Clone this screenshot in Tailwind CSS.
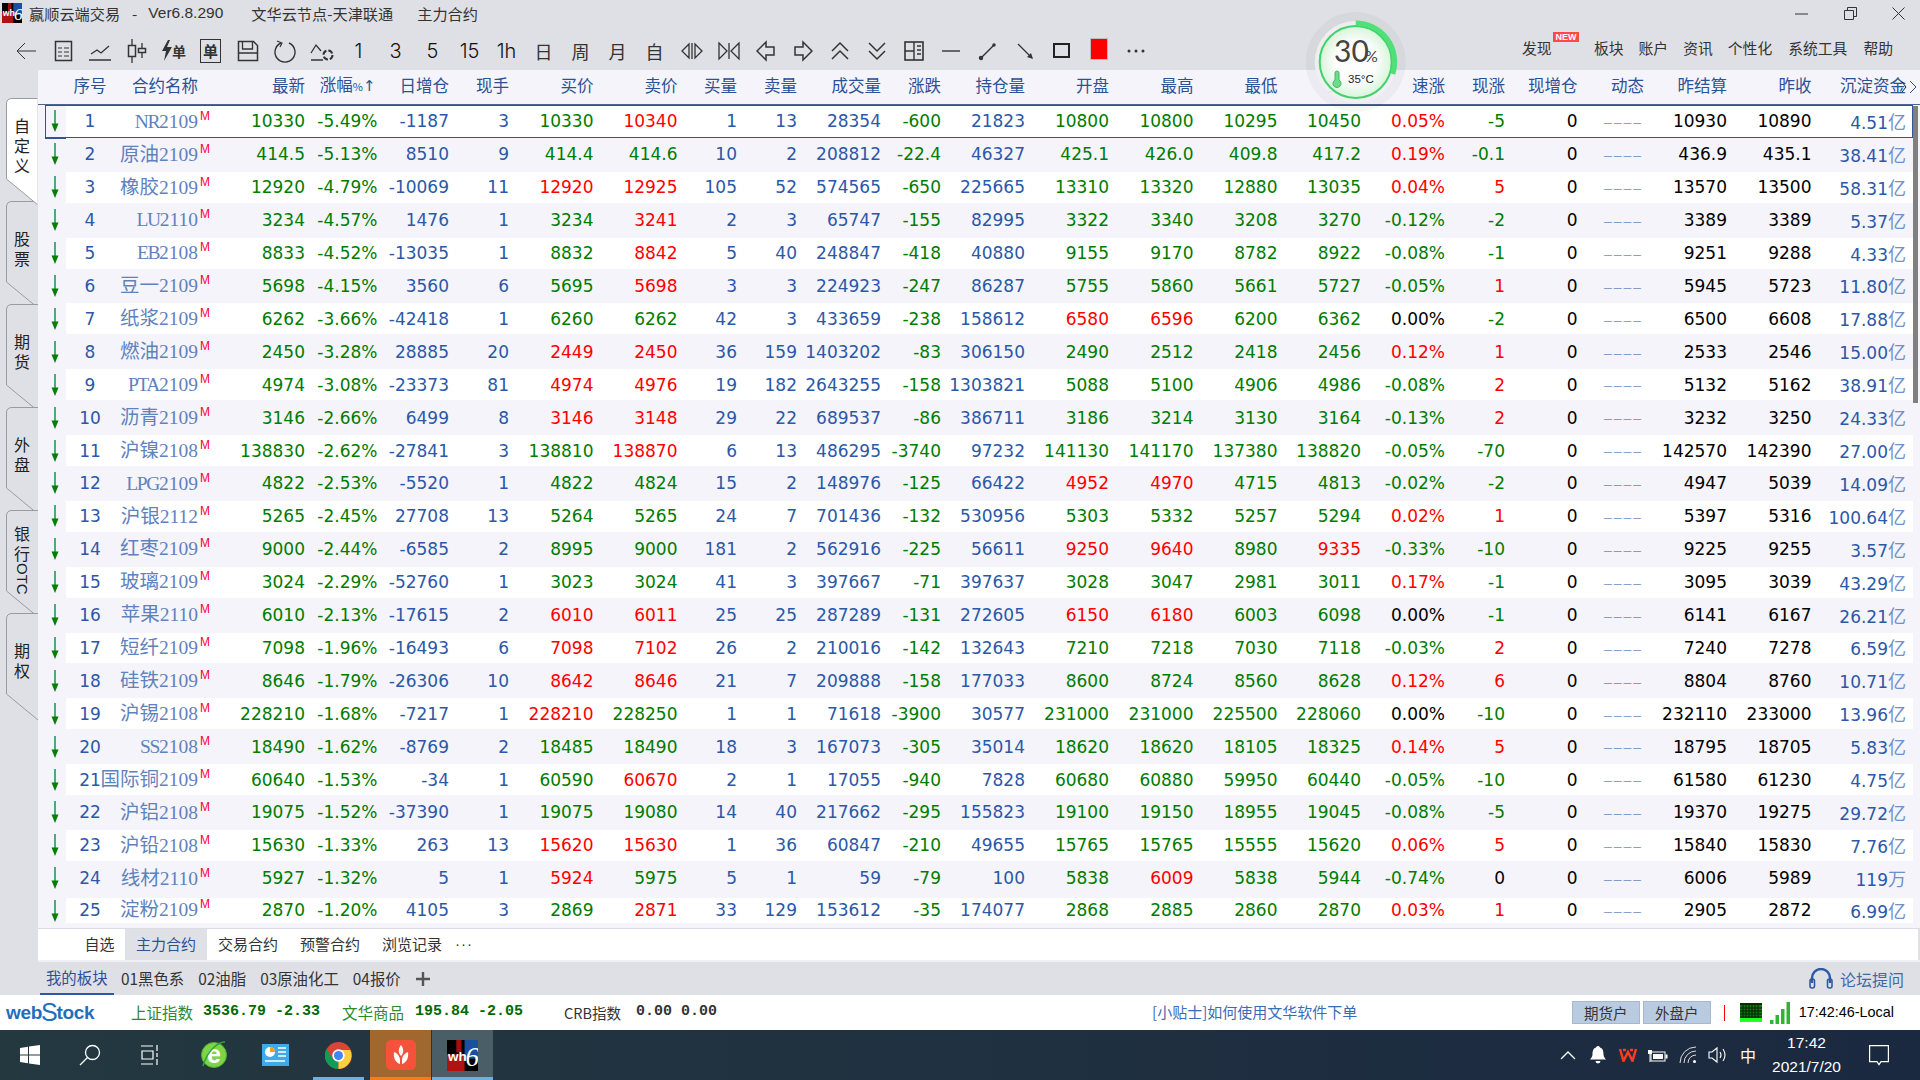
<!DOCTYPE html>
<html lang="zh">
<head>
  <meta charset="UTF-8" />
  <title>赢顺云端交易</title>
  <script src="https://cdn.jsdelivr.net/npm/@tailwindcss/browser@4"></script>
</head>
<body class="m-0 bg-[#dfe0e5] font-['Noto_Sans_CJK_SC',sans-serif] text-[#333]">

<svg class="hidden">
  <symbol id="wh6" viewBox="0 0 30 30">
    <rect width="30" height="30" fill="#000"/>
    <rect y="14" width="17" height="16" fill="#b01212"/>
    <rect x="9" y="0" width="5" height="12" fill="#a01010"/>
    <rect x="17" width="13" height="18" fill="#1c4fa0"/>
    <text x="1" y="20" font-family="Liberation Sans" font-weight="700" font-size="13" fill="#fff">wh</text>
    <text x="18" y="25" font-family="Liberation Serif" font-style="italic" font-size="26" fill="#fff">6</text>
  </symbol>
</svg>

<div class="relative w-[1920px] h-[1080px] overflow-hidden flex flex-col">

  <!-- title bar -->
  <div class="h-[26px] mb-[2px] flex items-center text-[15.2px] whitespace-nowrap">
    <svg class="ml-[2px] w-[20px] h-[20px]"><use href="#wh6"/></svg>
    <span class="ml-[7px] w-[89px]">赢顺云端交易</span>
    <span class="ml-[14px]">-</span>
    <span class="ml-[11px] font-['Liberation_Sans'] text-[15.5px]">Ver6.8.290</span>
    <span class="ml-[28px]">文华云节点-天津联通</span>
    <span class="ml-[24px]">主力合约</span>
    <div class="ml-auto flex items-center text-[#333]">
      <svg class="w-[13px] h-[13px]" viewBox="0 0 13 13"><path d="M0 7h13" stroke="currentColor"/></svg>
      <svg class="ml-[36px] w-[13px] h-[13px]" viewBox="0 0 13 13" fill="none" stroke="currentColor"><path d="M.5 3.5h9v9h-9zM3.5 3V.5h9v9h-3"/></svg>
      <svg class="ml-[35px] mr-[15px] w-[13px] h-[13px]" viewBox="0 0 13 13" stroke="currentColor"><path d="M.5.5l12 12M12.5.5l-12 12"/></svg>
    </div>
  </div>

  <!-- toolbar -->
  <div class="h-[42px] flex items-center whitespace-nowrap">
    <div id="tools" class="ml-[7px] mt-[3px] flex items-center text-[#333] h-[30px]">
      <div class="w-[37px] flex justify-center"><svg width="22" height="22" fill="none" stroke="currentColor" viewBox="0 0 22 22"><path d="M21 11H2M10 3l-8 8 8 8"/></svg></div>
      <div class="w-[37px] flex justify-center"><svg width="22" height="24" fill="none" stroke="currentColor" viewBox="0 0 22 24"><rect x="3.5" y="2.5" width="16" height="19" stroke-width="1.5"/><path d="M6 9h4M12 9h5M6 13h4M12 13h5M6 17h4M12 17h5"/></svg></div>
      <div class="w-[37px] flex justify-center"><svg width="24" height="22" fill="none" stroke="currentColor" viewBox="0 0 24 22"><path d="M3 14l6-4 4 3 8-7M1 20h22" stroke-width="1.3"/></svg></div>
      <div class="w-[37px] flex justify-center"><svg width="24" height="26" fill="none" stroke="currentColor" viewBox="0 0 24 26"><path d="M7 1v24M17 5v15" stroke-width="1.3"/><rect x="3.5" y="7.5" width="7" height="11" fill="#dfe0e5" stroke-width="1.5"/><rect x="13.5" y="10.5" width="7" height="4" fill="#dfe0e5" stroke-width="1.5"/></svg></div>
      <div class="w-[37px] flex justify-center items-center"><svg width="12" height="24" viewBox="0 0 12 24"><path d="M7 1L1 12h4l-2 10 8-14H6l3-7z" fill="#333"/></svg><span class="text-[14px] leading-none -ml-[1px] font-bold">单</span></div>
      <div class="w-[37px] flex justify-center"><div class="w-[21px] h-[24px] border-[1.5px] border-[#333] flex items-center justify-center text-[15px] leading-none font-bold">单</div></div>
      <div class="w-[37px] flex justify-center"><svg width="24" height="24" fill="none" stroke="currentColor" viewBox="0 0 24 24"><path d="M2.5 2.5h15l4 4v15h-19z" stroke-width="1.5"/><path d="M6.5 3v7h10V3M2.5 14h19" stroke-width="1.3"/></svg></div>
      <div class="w-[37px] flex justify-center"><svg width="24" height="24" fill="none" stroke="currentColor" viewBox="0 0 24 24"><path d="M8 4a10 10 0 1 0 8 0" stroke-width="1.4"/><path d="M4 2l5 2-2 4" stroke-width="1.2"/></svg></div>
      <div class="w-[37px] flex justify-center"><svg width="24" height="22" fill="none" stroke="currentColor" viewBox="0 0 24 22"><path d="M1 13l5-8 5 6M1 20h12" stroke-width="1.3"/><circle cx="18" cy="15" r="4.5" stroke-width="2" stroke-dasharray="5 2"/></svg></div>
      <div class="w-[37px] text-center text-[20px] text-[#111] font-['Inter'] font-light leading-none">1</div>
      <div class="w-[37px] text-center text-[20px] text-[#111] font-['Inter'] font-light leading-none">3</div>
      <div class="w-[37px] text-center text-[20px] text-[#111] font-['Inter'] font-light leading-none">5</div>
      <div class="w-[37px] text-center text-[20px] text-[#111] font-['Inter'] font-light leading-none">15</div>
      <div class="w-[37px] text-center text-[20px] text-[#111] font-['Inter'] font-light leading-none">1h</div>
      <div class="w-[37px] text-center text-[18px] leading-none">日</div>
      <div class="w-[37px] text-center text-[18px] leading-none">周</div>
      <div class="w-[37px] text-center text-[18px] leading-none">月</div>
      <div class="w-[37px] text-center text-[18px] leading-none">自</div>
      <div class="w-[37px] flex justify-center"><svg width="22" height="20" fill="none" stroke="currentColor" stroke-width="1.3" viewBox="0 0 22 20"><path d="M8 3L1 10l7 7zM14 3l7 7-7 7zM11 2v16"/></svg></div>
      <div class="w-[37px] flex justify-center"><svg width="22" height="20" fill="none" stroke="currentColor" stroke-width="1.3" viewBox="0 0 22 20"><path d="M1 2l8 8-8 8zM21 2l-8 8 8 8zM11 2v16"/></svg></div>
      <div class="w-[37px] flex justify-center"><svg width="20" height="22" fill="none" stroke="currentColor" stroke-width="1.5" viewBox="0 0 20 22"><path d="M10 2L1 11l9 9v-5h8V7h-8z"/></svg></div>
      <div class="w-[37px] flex justify-center"><svg width="20" height="22" fill="none" stroke="currentColor" stroke-width="1.5" viewBox="0 0 20 22"><path d="M10 2l9 9-9 9v-5H2V7h8z"/></svg></div>
      <div class="w-[37px] flex justify-center"><svg width="20" height="20" fill="none" stroke="currentColor" stroke-width="1.5" viewBox="0 0 20 20"><path d="M2 10l8-8 8 8M2 18l8-8 8 8"/></svg></div>
      <div class="w-[37px] flex justify-center"><svg width="20" height="20" fill="none" stroke="currentColor" stroke-width="1.5" viewBox="0 0 20 20"><path d="M2 2l8 8 8-8M2 10l8 8 8-8"/></svg></div>
      <div class="w-[37px] flex justify-center"><svg width="20" height="20" fill="none" stroke="currentColor" viewBox="0 0 20 20"><rect x="1" y="1" width="18" height="18" stroke-width="1.6"/><path d="M1 10h9M10 1v18M13 5h4M13 9h4M13 13h4" stroke-width="1.4"/></svg></div>
      <div class="w-[37px] flex justify-center"><svg width="20" height="20" stroke="currentColor" stroke-width="1.4" viewBox="0 0 20 20"><path d="M1 10h18"/></svg></div>
      <div class="w-[37px] flex justify-center"><svg width="20" height="20" fill="currentColor" stroke="currentColor" stroke-width="1.4" viewBox="0 0 20 20"><path d="M3 17L16 4"/><circle cx="3" cy="17" r="1.5"/><circle cx="16" cy="4" r="1"/></svg></div>
      <div class="w-[37px] flex justify-center"><svg width="20" height="20" fill="currentColor" stroke="currentColor" stroke-width="1.2" viewBox="0 0 20 20"><path d="M3 3l13 13"/><path d="M18 18l-6-2 4-4z" stroke="none"/></svg></div>
      <div class="w-[37px] flex justify-center"><div class="w-[17px] h-[15px] border-2 border-[#222]"></div></div>
      <div class="w-[37px] flex justify-center"><div class="w-[18px] h-[22px] bg-[#ff0000] border border-[#bbb] -mt-[4px]"></div></div>
      <div class="w-[37px] flex justify-center"><svg width="20" height="6" fill="currentColor" viewBox="0 0 20 6"><circle cx="3" cy="3" r="1.5"/><circle cx="10" cy="3" r="1.5"/><circle cx="17" cy="3" r="1.5"/></svg></div>
    </div>
    <div class="ml-auto pr-[27px] flex items-center text-[14.8px] -mt-[1px]">
      <div class="relative w-[30px]">发现<span class="absolute left-[31px] -top-[5px] w-[26px] h-[10px] bg-[#ff4848] text-white text-[9px] leading-[10px] font-bold text-center font-['Liberation_Sans']">NEW</span></div>
      <span class="ml-[42px]">板块</span>
      <span class="ml-[15px]">账户</span>
      <span class="ml-[15px]">资讯</span>
      <span class="ml-[15px]">个性化</span>
      <span class="ml-[16px]">系统工具</span>
      <span class="ml-[16px]">帮助</span>
    </div>
  </div>

  <!-- main -->
  <div class="h-[892px] flex">
    <div class="w-[38px] shrink-0 pt-[28px]" id="sidetabs">
      <div class="relative z-10 ml-[6px] w-[32px] h-[107px] -mb-[4px]">
        <svg class="absolute inset-0" width="32" height="107" viewBox="0 0 32 107"><path d="M32 .5H6Q.5 .5 .5 6V81L32 107Z" fill="#fff" stroke="#9a9aa2"/><path d="M32 0V107" stroke="#fff"/></svg>
        <div class="absolute inset-0 pt-[17px] flex flex-col items-center text-[16px] leading-[20px] text-[#222]"><span>自</span><span>定</span><span>义</span></div>
      </div>
      <div class="relative ml-[6px] w-[32px] h-[107px] -mb-[4px]">
        <svg class="absolute inset-0" width="32" height="107" viewBox="0 0 32 107"><path d="M32 .5H6Q.5 .5 .5 6V81L32 107" fill="#dfe0e5" stroke="#9a9aa2"/></svg>
        <div class="absolute inset-0 pt-[27px] flex flex-col items-center text-[16px] leading-[20px] text-[#222]"><span>股</span><span>票</span></div>
      </div>
      <div class="relative ml-[6px] w-[32px] h-[107px] -mb-[4px]">
        <svg class="absolute inset-0" width="32" height="107" viewBox="0 0 32 107"><path d="M32 .5H6Q.5 .5 .5 6V81L32 107" fill="#dfe0e5" stroke="#9a9aa2"/></svg>
        <div class="absolute inset-0 pt-[27px] flex flex-col items-center text-[16px] leading-[20px] text-[#222]"><span>期</span><span>货</span></div>
      </div>
      <div class="relative ml-[6px] w-[32px] h-[107px] -mb-[4px]">
        <svg class="absolute inset-0" width="32" height="107" viewBox="0 0 32 107"><path d="M32 .5H6Q.5 .5 .5 6V81L32 107" fill="#dfe0e5" stroke="#9a9aa2"/></svg>
        <div class="absolute inset-0 pt-[27px] flex flex-col items-center text-[16px] leading-[20px] text-[#222]"><span>外</span><span>盘</span></div>
      </div>
      <div class="relative ml-[6px] w-[32px] h-[107px] -mb-[4px]">
        <svg class="absolute inset-0" width="32" height="107" viewBox="0 0 32 107"><path d="M32 .5H6Q.5 .5 .5 6V81L32 107" fill="#dfe0e5" stroke="#9a9aa2"/></svg>
        <div class="absolute inset-0 pt-[13px] flex flex-col items-center text-[16px] leading-[20px] text-[#222]"><span>银</span><span>行</span><span class="[writing-mode:vertical-rl] font-['Liberation_Sans'] text-[15px]">OTC</span></div>
      </div>
      <div class="relative ml-[6px] w-[32px] h-[107px]">
        <svg class="absolute inset-0" width="32" height="107" viewBox="0 0 32 107"><path d="M32 .5H6Q.5 .5 .5 6V81L32 107" fill="#dfe0e5" stroke="#9a9aa2"/></svg>
        <div class="absolute inset-0 pt-[27px] flex flex-col items-center text-[16px] leading-[20px] text-[#222]"><span>期</span><span>权</span></div>
      </div>
    </div>

    <div class="relative w-[1882px] flex flex-col">
      <!-- table header -->
      <div class="relative h-[35px] shrink-0 bg-[#f4f4fa] border-b border-[#4a6490] pl-[28px] pb-[4px] grid grid-cols-[48px_96px_95px_72.5px_71.5px_60px_84.5px_84px_59.5px_60px_84px_60px_84px_84px_84.5px_84px_83.5px_84px_60px_72.5px_71.5px_78px_84.5px_94.5px] items-center text-right text-[16.5px] text-[#2c5196] whitespace-nowrap">
        <span class="text-center">序号</span><span class="pr-[12px]">合约名称</span><span>最新</span><span class="pr-[2px]">涨幅<span class="text-[11px]">%</span><span class="font-['DejaVu_Sans'] text-[15px]">↑</span></span><span>日增仓</span><span>现手</span><span>买价</span><span>卖价</span><span>买量</span><span>卖量</span><span>成交量</span><span>涨跌</span><span>持仓量</span><span>开盘</span><span>最高</span><span>最低</span><span>结算</span><span>速涨</span><span>现涨</span><span>现增仓</span><span class="pr-[5px]">动态</span><span>昨结算</span><span>昨收</span><span>沉淀资金</span>
        <svg class="absolute left-[1863px] top-[10px]" width="16" height="14" fill="none" viewBox="0 0 16 14"><path d="M1 2l4 5-4 5" stroke="#222"/><path d="M9 1l6 6-6 6" stroke="#2c5196"/></svg>
      </div>
      <!-- table body -->
      <div class="relative h-[823px] shrink-0 bg-[#f4f4fa]">
        <div id="rows" class="w-[1875px] flex flex-col"></div>
        <div class="absolute left-[1875px] top-[1px] w-[5px] h-[297px] bg-[#808080]"></div>
      </div>
      <div class="h-px shrink-0 bg-[#dcdce4]"></div>
      <!-- sheet tabs -->
      <div class="h-[31px] w-[1880px] shrink-0 bg-white flex items-center text-[15px] whitespace-nowrap">
        <span class="ml-[46.5px]">自选</span>
        <span class="ml-[10.5px] w-[82px] h-full flex items-center justify-center bg-[#dfe1e7] text-[#2c5196]">主力合约</span>
        <span class="ml-[11px]">交易合约</span>
        <span class="ml-[22px]">预警合约</span>
        <span class="ml-[22px]">浏览记录</span>
        <span class="ml-[13px] font-['Liberation_Sans'] tracking-[1px]">···</span>
      </div>
      <div class="h-[2px] shrink-0 bg-[#f0f0f5]"></div>
    </div>
  </div>

  <!-- sector tabs -->
  <div class="h-[33px] shrink-0 flex items-center text-[15.4px] text-[#333] whitespace-nowrap">
    <span class="ml-[40px] w-[73.5px] h-full flex items-center justify-center text-[#2c5196] border-b-2 border-[#2c5aa8]">我的板块</span>
    <span class="ml-[7.5px]">01黑色系</span>
    <span class="ml-[14px]">02油脂</span>
    <span class="ml-[14px]">03原油化工</span>
    <span class="ml-[14px]">04报价</span>
    <svg class="ml-[15px]" width="14" height="14" viewBox="0 0 14 14" stroke="#555" stroke-width="2.4"><path d="M0 7h14M7 0v14"/></svg>
    <div class="ml-auto pr-[16px] flex items-center text-[#3d6aa8]">
      <svg width="24" height="21" fill="none" stroke="#2c5aa8" viewBox="0 0 24 21"><path d="M3 15V10a9 9 0 0 1 18 0v5" stroke-width="2.4"/><rect x="1" y="11" width="4.5" height="9" rx="2" stroke-width="1.6"/><rect x="18.5" y="11" width="4.5" height="9" rx="2" stroke-width="1.6"/></svg>
      <span class="ml-[7px] text-[16px]">论坛提问</span>
    </div>
  </div>

  <!-- status bar -->
  <div class="h-[35px] shrink-0 bg-white flex items-center whitespace-nowrap text-[15.5px]">
    <div class="ml-[6px] w-[83px] font-['Liberation_Sans'] font-bold text-[#1e6fc0] text-[19px] tracking-[-0.3px] flex items-center leading-none">web<span class="text-[25px] font-normal -mx-[1px]">S</span>tock</div>
    <span class="ml-[42px] w-[62px] text-[#2c8a2c]">上证指数</span>
    <span class="ml-[10px] font-['Liberation_Mono'] font-bold text-[15px] text-[#006a00]">3536.79 -2.33</span>
    <span class="ml-[22px] w-[62px] text-[#2c8a2c]">文华商品</span>
    <span class="ml-[11px] font-['Liberation_Mono'] font-bold text-[15px] text-[#006a00]">195.84 -2.05</span>
    <span class="ml-[41px] w-[55px] text-[#333] text-[14.5px]">CRB指数</span>
    <span class="ml-[17px] font-['Liberation_Mono'] font-bold text-[15px] text-[#333]">0.00 0.00</span>
    <span class="ml-[435px] text-[15px] text-[#3a6cb5]">[小贴士]如何使用文华软件下单</span>
    <div class="ml-auto pr-[26px] flex items-center">
      <span class="w-[68px] h-[23px] flex items-center justify-center bg-[#b9cbe0] border border-[#a8b8cc] text-[14.5px] text-[#333]">期货户</span>
      <span class="ml-[3px] w-[68px] h-[23px] flex items-center justify-center bg-[#b9cbe0] border border-[#a8b8cc] text-[14.5px] text-[#333]">外盘户</span>
      <span class="ml-[13px] w-px h-[16px] bg-[#ff0000]"></span>
      <svg class="ml-[15px]" width="22" height="19" viewBox="0 0 22 19"><rect width="22" height="19" fill="#0a2a0a"/><rect y="15" width="22" height="4" fill="#22ff22"/><rect y="2" width="22" height="13" fill="#0c7a0c"/><path d="M3 2v13M6 2v13M9 2v13M12 2v13M15 2v13M18 2v13M0 5h22M0 8h22M0 11h22M0 14h22" stroke="#082008"/></svg>
      <svg class="ml-[8px]" width="20" height="22" viewBox="0 0 20 22" fill="#2fb52f"><rect x="0" y="18" width="3.5" height="4"/><rect x="5.5" y="13" width="3.5" height="9"/><rect x="11" y="7" width="3.5" height="15"/><rect x="16.5" y="0" width="3.5" height="22"/></svg>
      <span class="ml-[9px] font-['Liberation_Sans'] text-[14.4px] text-black">17:42:46-Local</span>
    </div>
  </div>

  <!-- taskbar -->
  <div class="h-[50px] shrink-0 flex bg-linear-to-r from-[#243840] to-[#1b2940] text-white">
    <div class="w-[60px] flex items-center justify-center"><svg width="20" height="20" viewBox="0 0 20 20" fill="#fff"><path d="M0 3l8-1.200V9.500H0zM9 1.600L20 0v9.500H9zM0 10.500h8V18.200L0 17zM9 10.500h11V20L9 18.400z"/></svg></div>
    <div class="w-[60px] flex items-center justify-center"><svg width="22" height="22" viewBox="0 0 22 22" fill="none" stroke="#fff" stroke-width="1.3"><circle cx="13.500" cy="8.500" r="7"/><path d="M8.500 13.500L1 21"/></svg></div>
    <div class="w-[61px] flex items-center justify-center"><svg width="20" height="20" viewBox="0 0 20 20" fill="none" stroke="#fff" stroke-width="1.200"><path d="M0 1h12M0 19h12M1 6h11v8H1zM16 0v6M16 8v4M16 14v6"/></svg></div>
    <div class="ml-[2px] w-[62px] flex items-center justify-center"><svg width="28" height="30" viewBox="0 0 28 30"><circle cx="14" cy="15" r="12.500" fill="#7ed348"/><circle cx="14" cy="15" r="12.500" fill="none" stroke="#4fb02e"/><text x="14" y="23" text-anchor="middle" font-family="Liberation Sans" font-weight="700" font-size="25" fill="#fff">e</text><path d="M25 2C20 2 8 8 3 26" fill="none" stroke="#2ea32e" stroke-width="1.500"/></svg></div>
    <div class="w-[61px] flex items-center justify-center"><svg width="27" height="22" viewBox="0 0 27 22"><rect width="27" height="22" fill="#3fa9ea"/><circle cx="8" cy="8" r="5" fill="#fff"/><path d="M8 8V3a5 5 0 0 1 5 5z" fill="#f39c2a"/><path d="M16 4h8M16 8h8M16 12h8M3 17h20" stroke="#fff" stroke-width="1.500"/></svg></div>
    <div class="ml-[2px] w-[61px] relative flex items-center justify-center"><svg width="27" height="27" viewBox="0 0 48 48"><circle cx="24" cy="24" r="24" fill="#db4437"/><path d="M24 24L3 36A24 24 0 0 0 24 48z" fill="#0f9d58"/><path d="M3 36A24 24 0 0 1 3 12L15 32z" fill="#0f9d58"/><path d="M24 14h21A24 24 0 0 1 24 48z" fill="#ffcd40"/><circle cx="24" cy="24" r="11" fill="#fff"/><circle cx="24" cy="24" r="8" fill="#4285f4"/></svg><span class="absolute left-[5px] bottom-0 w-[51px] h-[3px] bg-[#6ab0e8]"></span></div>
    <div class="ml-px w-[61px] relative flex items-center justify-center bg-[#a0672f]"><svg width="30" height="30" viewBox="0 0 30 30"><rect width="30" height="30" rx="5" fill="#f4523a"/><path d="M15 5c3 4 3 8 0 11-3-3-3-7 0-11zM8 12c3 1 6 4 6 8v4c-4-1-7-6-6-12zM22 12c-3 1-6 4-6 8v4c4-1 7-6 6-12z" fill="#fff"/></svg><span class="absolute left-0 bottom-0 w-full h-[3px] bg-[#ff7a10]"></span></div>
    <div class="ml-px w-[61px] relative flex items-center justify-center bg-[#4a5e68]"><svg class="w-[31px] h-[31px]"><use href="#wh6"/></svg><span class="absolute left-0 bottom-0 w-full h-[3px] bg-[#6ab0e8]"></span></div>

    <div class="ml-auto pr-[12px] flex items-center text-white">
      <div class="w-[30px] flex justify-center"><svg width="16" height="10" viewBox="0 0 16 10" fill="none" stroke="#fff" stroke-width="1.300"><path d="M1 9l7-7 7 7"/></svg></div>
      <div class="w-[30px] flex justify-center"><svg width="18" height="20" viewBox="0 0 18 20" fill="#fff"><path d="M9 1a2 2 0 0 1 2 1.500c3 1 3.500 4 3.500 7 0 2 1 3 2.500 5H1c1.500-2 2.500-3 2.500-5 0-3 .5-6 3.500-7A2 2 0 0 1 9 1zM6.500 16h5a2.500 2.500 0 0 1-5 0z"/></svg></div>
      <div class="w-[30px] flex justify-center"><svg width="18" height="14" viewBox="0 0 18 14" fill="none" stroke="#ff3b1f" stroke-width="2.500"><path d="M1 1l3.500 12L9 4l4.500 9L17 1M4 2h3M11 2h3"/></svg></div>
      <div class="w-[30px] flex justify-center"><svg width="20" height="13" viewBox="0 0 20 13"><path d="M0 1h4v4H0z" fill="#fff"/><path d="M2 5v8" stroke="#fff"/><rect x="3" y="3" width="14" height="9" fill="none" stroke="#fff"/><rect x="5" y="5" width="10" height="5" fill="#fff"/><rect x="17.500" y="5.500" width="2" height="4" fill="#fff"/></svg></div>
      <div class="w-[30px] flex justify-center"><svg width="18" height="18" viewBox="0 0 18 18" fill="none" stroke="#ddd"><path d="M1 17A16 16 0 0 1 17 1M5 17A12 12 0 0 1 17 5M9 17a8 8 0 0 1 8-8"/><circle cx="15.500" cy="15.500" r="1.500" fill="#fff" stroke="none"/></svg></div>
      <div class="w-[30px] flex justify-center"><svg width="20" height="18" viewBox="0 0 20 18" fill="none" stroke="#fff"><path d="M1 6h3l5-4v14l-5-4H1zM12 6q2 3 0 6M15 3q4 6 0 12" stroke-width="1.100"/></svg></div>
      <div class="w-[30px] text-center text-[16px] leading-none">中</div>
      <div class="w-[87px] text-center text-[15.5px] leading-[24px] font-['Liberation_Sans']"><div>17:42</div><div>2021/7/20</div></div>
      <div class="w-[58px] flex justify-center"><svg width="20" height="21" viewBox="0 0 20 21" fill="none" stroke="#fff" stroke-width="1.200"><path d="M.6.600h18.800v16H12l-2 3-2-3H.6z"/></svg></div>
    </div>
  </div>

  <!-- cpu gauge -->
  <svg class="absolute left-[1300px] top-[7px]" width="112" height="112" viewBox="0 0 112 112">
    <defs>
      <radialGradient id="gf"><stop offset="55%" stop-color="#fff"/><stop offset="100%" stop-color="#d6f5d8"/></radialGradient>
    </defs>
    <circle cx="55.700" cy="55" r="50" fill="#000" fill-opacity=".035"/>
    <circle cx="55.700" cy="55" r="41" fill="#f0f0f2" fill-opacity=".92"/>
    <circle cx="55.700" cy="55" r="36" fill="url(#gf)" fill-opacity=".9" stroke="#3fd36b" stroke-width="2"/>
    <path d="M55.700 16a39 39 0 0 1 37.100 51" fill="none" stroke="#4fe077" stroke-width="5"/>
    <text x="34" y="55" font-family="Lato" font-size="30" fill="#444">30</text>
    <text x="65" y="55" font-family="Lato" font-size="16" fill="#444">%</text>
    <text x="48" y="76" font-family="Liberation Sans" font-size="11.500" fill="#222">35°C</text>
    <path d="M35 66a2 2 0 0 1 4 0v7a4 4 0 1 1-4 0z" fill="#6fdc8c" stroke="#3fb765"/>
  </svg>
</div>

<script>
  // 最新 涨幅 日增仓 现手 买价 卖价 买量 卖量 成交量 涨跌 持仓量 开盘 最高 最低 结算 速涨 现涨 现增仓 昨结算 昨收 沉淀资金
  // an r in front of a price means it is drawn red
  const rowData = `
NR2109 10330 -5.49% -1187 3 10330 r10340 1 13 28354 -600 21823 10800 10800 10295 10450 0.05% -5 0 10930 10890 4.51亿
原油2109 414.5 -5.13% 8510 9 414.4 414.6 10 2 208812 -22.4 46327 425.1 426.0 409.8 417.2 0.19% -0.1 0 436.9 435.1 38.41亿
橡胶2109 12920 -4.79% -10069 11 r12920 r12925 105 52 574565 -650 225665 13310 13320 12880 13035 0.04% 5 0 13570 13500 58.31亿
LU2110 3234 -4.57% 1476 1 3234 r3241 2 3 65747 -155 82995 3322 3340 3208 3270 -0.12% -2 0 3389 3389 5.37亿
EB2108 8833 -4.52% -13035 1 8832 r8842 5 40 248847 -418 40880 9155 9170 8782 8922 -0.08% -1 0 9251 9288 4.33亿
豆一2109 5698 -4.15% 3560 6 5695 r5698 3 3 224923 -247 86287 5755 5860 5661 5727 -0.05% 1 0 5945 5723 11.80亿
纸浆2109 6262 -3.66% -42418 1 6260 6262 42 3 433659 -238 158612 r6580 r6596 6200 6362 0.00% -2 0 6500 6608 17.88亿
燃油2109 2450 -3.28% 28885 20 r2449 r2450 36 159 1403202 -83 306150 2490 2512 2418 2456 0.12% 1 0 2533 2546 15.00亿
PTA2109 4974 -3.08% -23373 81 r4974 r4976 19 182 2643255 -158 1303821 5088 5100 4906 4986 -0.08% 2 0 5132 5162 38.91亿
沥青2109 3146 -2.66% 6499 8 r3146 r3148 29 22 689537 -86 386711 3186 3214 3130 3164 -0.13% 2 0 3232 3250 24.33亿
沪镍2108 138830 -2.62% -27841 3 138810 r138870 6 13 486295 -3740 97232 141130 141170 137380 138820 -0.05% -70 0 142570 142390 27.00亿
LPG2109 4822 -2.53% -5520 1 4822 4824 15 2 148976 -125 66422 r4952 r4970 4715 4813 -0.02% -2 0 4947 5039 14.09亿
沪银2112 5265 -2.45% 27708 13 5264 5265 24 7 701436 -132 530956 5303 5332 5257 5294 0.02% 1 0 5397 5316 100.64亿
红枣2109 9000 -2.44% -6585 2 8995 9000 181 2 562916 -225 56611 r9250 r9640 8980 r9335 -0.33% -10 0 9225 9255 3.57亿
玻璃2109 3024 -2.29% -52760 1 3023 3024 41 3 397667 -71 397637 3028 3047 2981 3011 0.17% -1 0 3095 3039 43.29亿
苹果2110 6010 -2.13% -17615 2 r6010 r6011 25 25 287289 -131 272605 r6150 r6180 6003 6098 0.00% -1 0 6141 6167 26.21亿
短纤2109 7098 -1.96% -16493 6 r7098 r7102 26 2 210016 -142 132643 7210 7218 7030 7118 -0.03% 2 0 7240 7278 6.59亿
硅铁2109 8646 -1.79% -26306 10 r8642 r8646 21 7 209888 -158 177033 8600 8724 8560 8628 0.12% 6 0 8804 8760 10.71亿
沪锡2108 228210 -1.68% -7217 1 r228210 228250 1 1 71618 -3900 30577 231000 231000 225500 228060 0.00% -10 0 232110 233000 13.96亿
SS2108 18490 -1.62% -8769 2 18485 18490 18 3 167073 -305 35014 18620 18620 18105 18325 0.14% 5 0 18795 18705 5.83亿
国际铜2109 60640 -1.53% -34 1 60590 r60670 2 1 17055 -940 7828 60680 60880 59950 60440 -0.05% -10 0 61580 61230 4.75亿
沪铝2108 19075 -1.52% -37390 1 19075 19080 14 40 217662 -295 155823 19100 19150 18955 19045 -0.08% -5 0 19370 19275 29.72亿
沪铅2108 15630 -1.33% 263 13 r15620 r15630 1 36 60847 -210 49655 15765 15765 15555 15620 0.06% 5 0 15840 15830 7.76亿
线材2110 5927 -1.32% 5 1 r5924 5975 5 1 59 -79 100 5838 r6009 5838 5944 -0.74% 0 0 6006 5989 119万
淀粉2109 2870 -1.20% 4105 3 2869 r2871 33 129 153612 -35 174077 2868 2885 2860 2870 0.03% 1 0 2905 2872 6.99亿
`.trim().split('\n').map(l => l.split(' '));

  const BLUE = 'text-[#2b58a8]', GREEN = 'text-[#007c00]', RED = 'text-[#ff0000]', BLACK = 'text-black';

  function signColor(v) {
    const n = parseFloat(v);
    return n > 0 ? RED : n < 0 ? GREEN : BLACK;
  }
  function price(v) {
    return v[0] === 'r' ? `<span class="${RED}">${v.slice(1)}</span>` : `<span class="${GREEN}">${v}</span>`;
  }
  function plain(v, color) {
    return `<span class="${color}">${v}</span>`;
  }
  // latin contract letters sit tighter than the digits next to them
  function contract(name) {
    const m = name.match(/^([A-Z]+)(\d+)$/);
    return m ? `<span class="tracking-[-1.4px]">${m[1]}</span>${m[2]}` : name;
  }

  const arrow = `<svg width="10" height="24" viewBox="0 0 10 24"><path d="M5 1v17" stroke="#0a8a3c" stroke-width="1.400"/><path d="M1.500 14.500h7L5 23z" fill="#008000"/></svg>`;

  document.getElementById('rows').innerHTML = rowData.map((r, i) => {
    const [name, last, pct, oi, hand, bid, ask, bq, aq, vol, chg, hold, open, high, low, avg, spd, cur, add, pre, close, fund] = r;
    let band = i % 2 === 0 ? 'bg-white border-y border-[#f4f4fa]' : 'bg-[#f4f4fa]';
    if (i === 0) band = 'bg-white';
    if (i === 24) band = 'bg-white border-t-[3px] border-b-[5px] border-[#f4f4fa]';
    const selected = i === 0 ? '<div class="absolute left-[7px] right-0 top-0 -bottom-px border border-b-2 border-[#2f5597]"></div>' : '';
    const unit = fund.slice(-1), amount = fund.slice(0, -1);
    return `<div class="relative h-[32.92px] flex">
      <div class="w-[28px] shrink-0 flex items-center justify-center pl-[5px]">${arrow}</div>
      <div class="flex-1 ${band} pt-px grid grid-cols-[48px_96px_95px_72.5px_71.5px_60px_84.5px_84px_59.5px_60px_84px_60px_84px_84px_84.5px_84px_83.5px_84px_60px_72.5px_71.5px_78px_84.5px_94.5px] items-center text-right font-['DejaVu_Sans','Noto_Sans_CJK_SC',sans-serif] text-[17px] leading-none whitespace-nowrap">
        <span class="text-center ${BLUE}">${i + 1}</span>
        <div class="relative -mt-px flex justify-end pr-[12px] font-['Liberation_Serif','Noto_Sans_CJK_SC',serif] text-[19.5px] text-[#5f82bd]"><span>${contract(name)}</span><span class="absolute right-0 -top-[2px] font-['Liberation_Sans'] text-[12px] text-[#ff0033]">M</span></div>
        ${plain(last, GREEN)}${plain(pct, GREEN)}${plain(oi, BLUE)}${plain(hand, BLUE)}
        ${price(bid)}${price(ask)}${plain(bq, BLUE)}${plain(aq, BLUE)}${plain(vol, BLUE)}
        ${plain(chg, GREEN)}${plain(hold, BLUE)}${price(open)}${price(high)}${price(low)}${price(avg)}
        ${plain(spd, signColor(spd))}${plain(cur, signColor(cur))}${plain(add, BLACK)}
        <span class="pr-[6px] font-['Liberation_Serif'] text-[15.5px] tracking-[2px] ${BLUE}">––––</span>
        ${plain(pre, BLACK)}${plain(close, BLACK)}
        <span class="${BLUE}">${amount}<span class="font-['Noto_Sans_CJK_SC'] text-[18px] text-[#6f90c8]">${unit}</span></span>
      </div>
      ${selected}
    </div>`;
  }).join('');
</script>
</body>
</html>
